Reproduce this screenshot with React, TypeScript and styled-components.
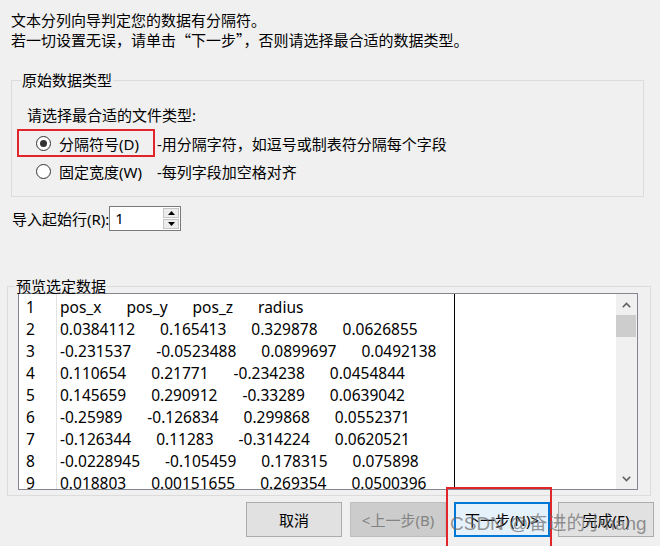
import React from "react";
import styled, { createGlobalStyle } from "styled-components";

const GlobalStyle = createGlobalStyle`
  html, body { margin: 0; padding: 0; background: #f0f0f0; }
  body { font-family: "Noto Sans", "Noto Sans CJK SC", sans-serif; }
`;

const Window = styled.div`
  position: relative;
  width: 660px;
  height: 546px;
  overflow: hidden;
  background: #f0f0f0;
  color: #000;
  font-size: 15px;
  font-family: "Noto Sans", "Noto Sans CJK SC", sans-serif;
`;

const Intro = styled.div`
  padding: 10px 0 0 11px;
  font-family: "Noto Sans CJK SC", sans-serif;
  line-height: 20px;
`;

const GroupBox = styled.fieldset<{ $top: number; $left: number; $width: number; $bottom: number }>`
  margin: ${(p) => p.$top}px 0 0 ${(p) => p.$left}px;
  width: ${(p) => p.$width}px;
  min-inline-size: 0;
  box-sizing: border-box;
  padding: 0 0 ${(p) => p.$bottom}px 0;
  border: 1px solid #dcdcdc;
`;

const Legend = styled.legend<{ $offset: number }>`
  margin-left: ${(p) => p.$offset}px;
  padding: 0 1px;
  line-height: 14px;
  font-family: "Noto Sans CJK SC", sans-serif;
`;

const Prompt = styled.div`
  margin: 18px 0 0 15px;
  line-height: 20px;
`;

const OptionRow = styled.div<{ $first?: boolean }>`
  display: flex;
  align-items: center;
  height: 28px;
  margin-top: ${(p) => (p.$first ? 4 : 0)}px;
  padding-left: 5px;
`;

const RadioCell = styled.label<{ $marked?: boolean }>`
  box-sizing: border-box;
  width: 138px;
  height: 28px;
  display: flex;
  align-items: center;
  gap: 8px;
  padding-left: 17px;
  border: 2px solid ${(p) => (p.$marked ? "#e0252b" : "transparent")};
`;

const Radio = styled.span<{ $checked?: boolean }>`
  box-sizing: border-box;
  width: 15px;
  height: 15px;
  border-radius: 50%;
  border: 1px solid #333;
  background: #fff;
  display: flex;
  align-items: center;
  justify-content: center;
  &::after {
    content: "";
    width: 7px;
    height: 7px;
    border-radius: 50%;
    background: #333;
    display: ${(p) => (p.$checked ? "block" : "none")};
  }
`;

const Desc = styled.span`
  margin-left: 2px;
`;

const ImportRow = styled.div`
  display: flex;
  align-items: center;
  height: 25px;
  margin: 9px 0 0 12px;
`;

const Spinner = styled.div`
  display: flex;
  box-sizing: border-box;
  width: 72px;
  height: 25px;
  border: 1px solid #7a7a7a;
  background: #fff;
`;

const SpinValue = styled.span`
  flex: 1;
  padding-left: 5px;
  line-height: 23px;
`;

const SpinButtons = styled.div`
  display: flex;
  flex-direction: column;
  width: 16px;
  padding: 1px 1px 1px 0;
  gap: 1px;
`;

const SpinButton = styled.span`
  flex: 1;
  background: #ececec;
  border: 1px solid #c4c4c4;
  display: flex;
  align-items: center;
  justify-content: center;
`;

const ListBox = styled.div`
  display: flex;
  box-sizing: border-box;
  width: 620px;
  height: 197px;
  margin: 0 0 5px 10px;
  border: 1px solid #828790;
  background: #fff;
  overflow: hidden;
  font-size: 15.5px;
`;

const NumColumn = styled.div`
  box-sizing: border-box;
  width: 38px;
  border-right: 1px solid #e3e3e3;
  padding: 2px 0 0 7px;
`;

const DataColumn = styled.div`
  box-sizing: border-box;
  width: 398px;
  border-right: 1px solid #000;
  padding: 2px 0 0 3px;
`;

const Blank = styled.div`
  flex: 1;
`;

const Row = styled.div`
  display: flex;
  gap: 25px;
  height: 22px;
  line-height: 22px;
  white-space: nowrap;
`;

const ScrollBar = styled.div`
  width: 21px;
  background: #f0f0f0;
  display: flex;
  flex-direction: column;
`;

const ScrollArrow = styled.div`
  height: 21px;
  display: flex;
  align-items: center;
  justify-content: center;
`;

const ScrollThumb = styled.div`
  height: 22px;
  margin-right: 1px;
  background: #cdcdcd;
`;

const ScrollTrack = styled.div`
  flex: 1;
`;

const ButtonBar = styled.div`
  display: flex;
  justify-content: flex-end;
  gap: 8px;
  margin-top: 6px;
  padding-right: 6px;
`;

type Variant = "normal" | "disabled" | "default";

const Button = styled.button<{ $variant: Variant }>`
  box-sizing: border-box;
  width: 96px;
  height: 35px;
  padding: 0;
  font-family: "Noto Sans", "Noto Sans CJK SC", sans-serif;
  font-size: 15px;
  color: ${(p) => (p.$variant === "disabled" ? "#838383" : "#000")};
  background: ${(p) =>
    p.$variant === "disabled" ? "#cccccc" : p.$variant === "default" ? "#e5f1fb" : "#e1e1e1"};
  border: ${(p) =>
    p.$variant === "disabled"
      ? "1px solid #bfbfbf"
      : p.$variant === "default"
      ? "2px solid #0078d7"
      : "1px solid #adadad"};
`;

const Highlight = styled.span`
  position: relative;
  display: inline-flex;
  &::after {
    content: "";
    position: absolute;
    left: -8px;
    right: -2px;
    top: -15px;
    bottom: -14px;
    border: 2px solid #e0252b;
    pointer-events: none;
  }
`;

const Watermark = styled.div`
  position: absolute;
  left: 450px;
  top: 512px;
  font-size: 19px;
  line-height: 24px;
  font-family: "Liberation Sans", "Noto Sans CJK SC", sans-serif;
  color: rgba(105, 105, 105, 0.7);
  white-space: nowrap;
  pointer-events: none;
`;

const Chevron = ({ up }: { up?: boolean }) => (
  <svg width="9" height="6" viewBox="0 0 9 6">
    <polyline
      points={up ? "0.8,5.2 4.5,1.5 8.2,5.2" : "0.8,0.8 4.5,4.5 8.2,0.8"}
      fill="none"
      stroke="#606060"
      strokeWidth="1.6"
    />
  </svg>
);

const Triangle = ({ up }: { up?: boolean }) => (
  <svg width="7" height="4" viewBox="0 0 7 4">
    <polygon points={up ? "0,4 3.5,0 7,4" : "0,0 3.5,4 7,0"} fill="#000" />
  </svg>
);

const rows: string[][] = [
  ["pos_x", "pos_y", "pos_z", "radius"],
  ["0.0384112", "0.165413", "0.329878", "0.0626855"],
  ["-0.231537", "-0.0523488", "0.0899697", "0.0492138"],
  ["0.110654", "0.21771", "-0.234238", "0.0454844"],
  ["0.145659", "0.290912", "-0.33289", "0.0639042"],
  ["-0.25989", "-0.126834", "0.299868", "0.0552371"],
  ["-0.126344", "0.11283", "-0.314224", "0.0620521"],
  ["-0.0228945", "-0.105459", "0.178315", "0.075898"],
  ["0.018803", "0.00151655", "0.269354", "0.0500396"],
];

export default function App() {
  return (
    <>
      <GlobalStyle />
      <Window>
        <Intro>
          <div>文本分列向导判定您的数据有分隔符。</div>
          <div>若一切设置无误，请单击“下一步”，否则请选择最合适的数据类型。</div>
        </Intro>

        <GroupBox $top={23} $left={11} $width={633} $bottom={11}>
          <Legend $offset={9}>原始数据类型</Legend>
          <Prompt>请选择最合适的文件类型:</Prompt>
          <OptionRow $first>
            <RadioCell $marked>
              <Radio $checked />
              <span>分隔符号(D)</span>
            </RadioCell>
            <Desc>-用分隔字符，如逗号或制表符分隔每个字段</Desc>
          </OptionRow>
          <OptionRow>
            <RadioCell>
              <Radio />
              <span>固定宽度(W)</span>
            </RadioCell>
            <Desc>-每列字段加空格对齐</Desc>
          </OptionRow>
        </GroupBox>

        <ImportRow>
          <span>导入起始行(R):</span>
          <Spinner>
            <SpinValue>1</SpinValue>
            <SpinButtons>
              <SpinButton>
                <Triangle up />
              </SpinButton>
              <SpinButton>
                <Triangle />
              </SpinButton>
            </SpinButtons>
          </Spinner>
        </ImportRow>

        <GroupBox $top={48} $left={7} $width={644} $bottom={0}>
          <Legend $offset={7}>预览选定数据</Legend>
          <ListBox>
            <NumColumn>
              {rows.map((_, i) => (
                <Row key={i}>{i + 1}</Row>
              ))}
            </NumColumn>
            <DataColumn>
              {rows.map((r, i) => (
                <Row key={i}>
                  {r.map((c, j) => (
                    <span key={j}>{c}</span>
                  ))}
                </Row>
              ))}
            </DataColumn>
            <Blank />
            <ScrollBar>
              <ScrollArrow>
                <Chevron up />
              </ScrollArrow>
              <ScrollThumb />
              <ScrollTrack />
              <ScrollArrow>
                <Chevron />
              </ScrollArrow>
            </ScrollBar>
          </ListBox>
        </GroupBox>

        <ButtonBar>
          <Button $variant="normal">取消</Button>
          <Button $variant="disabled">&lt;上一步(B)</Button>
          <Highlight>
            <Button $variant="default">下一步(N)&gt;</Button>
          </Highlight>
          <Button $variant="normal">完成(F)</Button>
        </ButtonBar>

        <Watermark>CSDN @奋进的小hang</Watermark>
      </Window>
    </>
  );
}
